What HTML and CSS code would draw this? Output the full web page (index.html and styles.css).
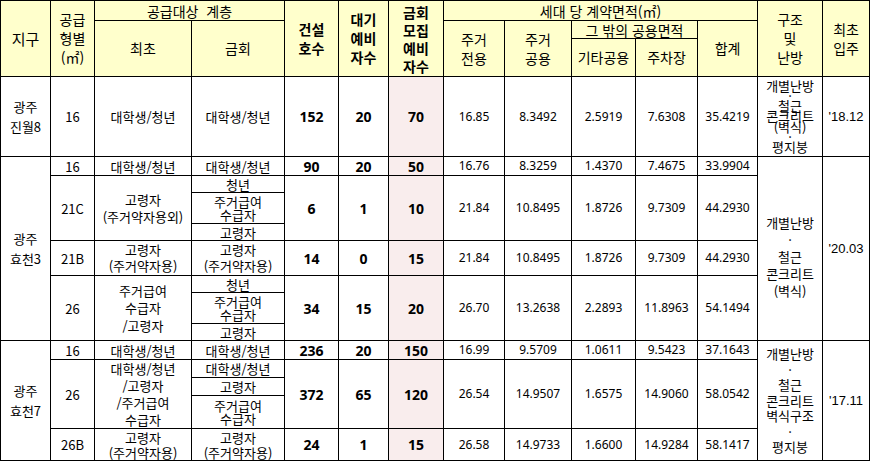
FILE: index.html
```html
<!DOCTYPE html>
<html lang="ko">
<head>
<meta charset="utf-8">
<link rel="stylesheet" href="styles.css">
</head>
<body>
<table class="t">
<colgroup>
<col class="c50"><col class="c44"><col class="c97"><col class="c93"><col class="c54"><col class="c50"><col class="c55"><col class="c61"><col class="c67"><col class="c64"><col class="c62"><col class="c60"><col class="c65"><col class="c47">
</colgroup>
<tr class="r20">
<th rowspan="3" class="h big">지구</th>
<th rowspan="3" class="h">공급<br>형별<br>(㎡)</th>
<th colspan="2" class="h one">공급대상&nbsp; 계층</th>
<th rowspan="3" class="h bh">건설<br>호수</th>
<th rowspan="3" class="h bh">대기<br>예비<br>자수</th>
<th rowspan="3" class="h bh h4">금회<br>모집<br>예비<br>자수</th>
<th colspan="5" class="h one">세대 당 계약면적(㎡)</th>
<th rowspan="3" class="h">구조<br>및<br>난방</th>
<th rowspan="3" class="h">최초<br>입주</th>
</tr>
<tr class="r18">
<th rowspan="2" class="h">최초</th>
<th rowspan="2" class="h">금회</th>
<th rowspan="2" class="h">주거<br>전용</th>
<th rowspan="2" class="h">주거<br>공용</th>
<th colspan="2" class="h one">그 밖의 공용면적</th>
<th rowspan="2" class="h">합계</th>
</tr>
<tr class="r38">
<th class="h">기타공용</th>
<th class="h">주차장</th>
</tr>

<tr class="r80">
<td class="k zg">광주<br>진월8</td>
<td class="k">16</td>
<td class="k">대학생/청년</td>
<td class="k">대학생/청년</td>
<td class="b">152</td>
<td class="b">20</td>
<td class="b pk">70</td>
<td class="n">16.85</td>
<td class="n">8.3492</td>
<td class="n">2.5919</td>
<td class="n">7.6308</td>
<td class="n">35.4219</td>
<td class="k tight">개별난방<br>·<br>철근<br>콘크리트<br>(벽식)<br>·<br>평지붕</td>
<td class="d">'18.12</td>
</tr>

<tr class="r19">
<td rowspan="8" class="k zg">광주<br>효천3</td>
<td class="k">16</td>
<td class="k">대학생/청년</td>
<td class="k">대학생/청년</td>
<td class="b">90</td>
<td class="b">20</td>
<td class="b pk">50</td>
<td class="n">16.76</td>
<td class="n">8.3259</td>
<td class="n">1.4370</td>
<td class="n">7.4675</td>
<td class="n">33.9904</td>
<td rowspan="8" class="k low">개별난방<br>·<br>철근<br>콘크리트<br>(벽식)</td>
<td rowspan="8" class="d">'20.03</td>
</tr>
<tr class="r17">
<td rowspan="3" class="k">21C</td>
<td rowspan="3" class="k pair">고령자<br>(주거약자용외)</td>
<td class="k">청년</td>
<td rowspan="3" class="b">6</td>
<td rowspan="3" class="b">1</td>
<td rowspan="3" class="b pk">10</td>
<td rowspan="3" class="n">21.84</td>
<td rowspan="3" class="n">10.8495</td>
<td rowspan="3" class="n">1.8726</td>
<td rowspan="3" class="n">9.7309</td>
<td rowspan="3" class="n">44.2930</td>
</tr>
<tr class="r31"><td class="k two">주거급여<br>수급자</td></tr>
<tr class="r17"><td class="k">고령자</td></tr>
<tr class="r35">
<td class="k">21B</td>
<td class="k pair2">고령자<br>(주거약자용)</td>
<td class="k pair2">고령자<br>(주거약자용)</td>
<td class="b">14</td>
<td class="b">0</td>
<td class="b pk">15</td>
<td class="n">21.84</td>
<td class="n">10.8495</td>
<td class="n">1.8726</td>
<td class="n">9.7309</td>
<td class="n">44.2930</td>
</tr>
<tr class="r17">
<td rowspan="3" class="k">26</td>
<td rowspan="3" class="k three">주거급여<br>수급자<br>/고령자</td>
<td class="k">청년</td>
<td rowspan="3" class="b">34</td>
<td rowspan="3" class="b">15</td>
<td rowspan="3" class="b pk">20</td>
<td rowspan="3" class="n">26.70</td>
<td rowspan="3" class="n">13.2638</td>
<td rowspan="3" class="n">2.2893</td>
<td rowspan="3" class="n">11.8963</td>
<td rowspan="3" class="n">54.1494</td>
</tr>
<tr class="r31"><td class="k two">주거급여<br>수급자</td></tr>
<tr class="r17"><td class="k">고령자</td></tr>

<tr class="r19">
<td rowspan="5" class="k zg">광주<br>효천7</td>
<td class="k">16</td>
<td class="k">대학생/청년</td>
<td class="k">대학생/청년</td>
<td class="b">236</td>
<td class="b">20</td>
<td class="b pk">150</td>
<td class="n">16.99</td>
<td class="n">9.5709</td>
<td class="n">1.0611</td>
<td class="n">9.5423</td>
<td class="n">37.1643</td>
<td rowspan="5" class="k mid">개별난방<br>·<br>철근<br>콘크리트<br>벽식구조<br>·<br>평지붕</td>
<td rowspan="5" class="d">'17.11</td>
</tr>
<tr class="r18">
<td rowspan="3" class="k">26</td>
<td rowspan="3" class="k four">대학생/청년<br>/고령자<br>/주거급여<br>수급자</td>
<td class="k">대학생/청년</td>
<td rowspan="3" class="b">372</td>
<td rowspan="3" class="b">65</td>
<td rowspan="3" class="b pk">120</td>
<td rowspan="3" class="n">26.54</td>
<td rowspan="3" class="n">14.9507</td>
<td rowspan="3" class="n">1.6575</td>
<td rowspan="3" class="n">14.9060</td>
<td rowspan="3" class="n">58.0542</td>
</tr>
<tr class="r17"><td class="k">고령자</td></tr>
<tr class="r33"><td class="k two">주거급여<br>수급자</td></tr>
<tr class="r32">
<td class="k">26B</td>
<td class="k">고령자<br>(주거약자용)</td>
<td class="k">고령자<br>(주거약자용)</td>
<td class="b">24</td>
<td class="b">1</td>
<td class="b pk">15</td>
<td class="n">26.58</td>
<td class="n">14.9733</td>
<td class="n">1.6600</td>
<td class="n">14.9284</td>
<td class="n">58.1417</td>
</tr>
</table>
</body>
</html>
```

FILE: styles.css
```css
html, body {
  margin: 0;
  padding: 0;
  background: #ffffff;
}
.t {
  border-collapse: collapse;
  table-layout: fixed;
  width: 869px;
  font-family: "Noto Sans CJK KR", "Noto Sans", sans-serif;
  color: #000;
}
.c50 { width: 50px; }
.c44 { width: 44px; }
.c97 { width: 97px; }
.c93 { width: 93px; }
.c54 { width: 54px; }
.c55 { width: 55px; }
.c61 { width: 61px; }
.c67 { width: 67px; }
.c64 { width: 64px; }
.c62 { width: 62px; }
.c60 { width: 60px; }
.c65 { width: 65px; }
.c47 { width: 47px; }

.t th, .t td {
  border: 1px solid #000;
  padding: 0;
  text-align: center;
  vertical-align: middle;
  overflow: visible;
  white-space: nowrap;
}
.h {
  background: #ffffcc;
  font-weight: 400;
  font-size: 14px;
  line-height: 19px;
}
.h.one { line-height: 16px; }
.h.h4 { line-height: 18px; }
.big { font-size: 15px; }
.bh { font-weight: 700; }
.k {
  font-size: 13px;
  line-height: 15px;
}
.zg { line-height: 20px; }
.pair { line-height: 17px; }
.pair2 { line-height: 16.5px; }
.two { line-height: 13px; }
.three { line-height: 17.5px; }
.four { line-height: 17px; }
.tight { line-height: 10.2px; }
.low { line-height: 17px; }
.t td.low { padding-top: 16px; }
.mid { line-height: 15.6px; }
.b {
  font-family: "Noto Sans", sans-serif;
  font-weight: 700;
  font-size: 14px;
  line-height: 15px;
}
.n {
  font-family: "Noto Sans", sans-serif;
  font-size: 12px;
  line-height: 14px;
}
.d {
  font-family: "Liberation Sans", sans-serif;
  font-size: 13px;
}
.pk { background: #f9eded; }

.r20 { height: 20px; }
.r18 { height: 18px; }
.r38 { height: 38px; }
.r80 { height: 80px; }
.r19 { height: 19px; }
.r17 { height: 17px; }
.r31 { height: 31px; }
.r35 { height: 35px; }
.r33 { height: 33px; }
.r32 { height: 32px; }
```
